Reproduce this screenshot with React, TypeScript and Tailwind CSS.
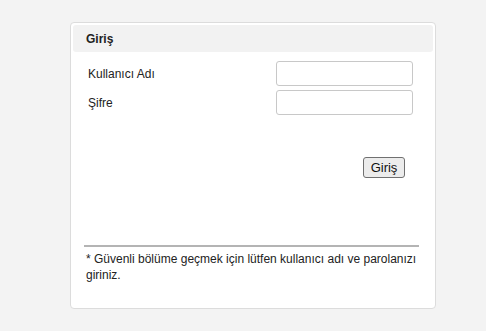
export default function App() {
  return (
    <div className="min-h-[331px] w-[486px] bg-[#f3f3f3] pt-[22px] pl-[70px] font-['Liberation_Sans',Arial,sans-serif] text-[12px] text-[#222]">
      <div className="flex h-[287px] w-[366px] flex-col rounded-[4px] border border-[#dcdcdc] bg-white px-[2px] pt-[2px]">
        <div className="flex h-[27px] items-center rounded-[3px] bg-[#f2f2f2] pl-[13px] font-bold text-[12px] text-[#222]">
          Giriş
        </div>
        <div className="flex flex-col gap-[4px] pt-[9px] pl-[15px] pr-[20px]">
          <div className="flex items-center justify-between">
            <label className="leading-[14px]">Kullanıcı Adı</label>
            <input
              type="text"
              className="h-[25px] w-[137px] rounded-[3px] border border-[#c8c8c8] bg-white outline-none"
            />
          </div>
          <div className="flex items-center justify-between">
            <label className="leading-[14px]">Şifre</label>
            <input
              type="password"
              className="h-[25px] w-[137px] rounded-[3px] border border-[#c8c8c8] bg-white outline-none"
            />
          </div>
        </div>
        <div className="flex justify-end pt-[42px] pr-[28px]">
          <button
            type="button"
            className="h-[21px] w-[42px] rounded-[3px] border border-[#707070] bg-[#ececec] text-[13px] leading-none text-[#111]"
          >
            Giriş
          </button>
        </div>
        <div className="ml-[11px] mr-[14px] mt-[67px] border-t-2 border-[#b4b4b4]" />
        <p className="mt-[4px] pl-[13px] pr-[12px] leading-[16px] text-[#222]">
          * Güvenli bölüme geçmek için lütfen kullanıcı adı ve parolanızı giriniz.
        </p>
      </div>
    </div>
  );
}
